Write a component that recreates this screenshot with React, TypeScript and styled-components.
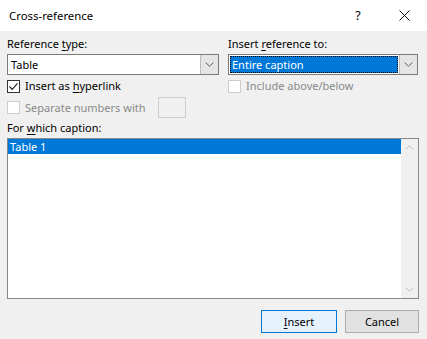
import React from "react";
import styled, { createGlobalStyle } from "styled-components";

const GlobalStyle = createGlobalStyle`
  html, body { margin: 0; padding: 0; }
  body {
    background: #f0f0f0;
    font-family: "Noto Sans", "Open Sans", sans-serif;
    font-size: 11px;
    color: #000;
  }
`;

const Dialog = styled.div`
  width: 427px;
  height: 339px;
  display: flex;
  flex-direction: column;
  background: #f0f0f0;
  overflow: hidden;
`;

const TitleBar = styled.div`
  height: 31px;
  background: #ffffff;
  display: flex;
  align-items: center;
  padding-left: 9px;
  box-sizing: border-box;
`;

const Title = styled.div`
  flex: 1;
  font-size: 11.4px;
  line-height: 16px;
`;

const TitleButton = styled.div`
  width: 46px;
  height: 31px;
  display: flex;
  align-items: center;
  justify-content: center;
  font-size: 12.5px;
`;

const Body = styled.div`
  flex: 1;
  display: flex;
  flex-direction: column;
  padding: 5px 8px 8px 7px;
  box-sizing: border-box;
`;

const TopGrid = styled.div`
  display: grid;
  grid-template-columns: 212px 190px;
  column-gap: 9px;
`;

const Column = styled.div`
  display: flex;
  flex-direction: column;
`;

const Label = styled.div<{ $disabled?: boolean }>`
  line-height: 16px;
  height: 16px;
  white-space: nowrap;
  color: ${(p) => (p.$disabled ? "#8a8a8a" : "#000")};
`;

const FieldLabel = styled(Label)`
  margin-bottom: 2px;
`;

const Combo = styled.div`
  height: 21px;
  box-sizing: border-box;
  border: 1px solid #7a7a7a;
  background: #fff;
  display: flex;
  align-items: stretch;
`;

const ComboText = styled.div<{ $selected?: boolean }>`
  flex: 1;
  display: flex;
  align-items: center;
  padding-left: ${(p) => (p.$selected ? "2px" : "3px")};
  margin: ${(p) => (p.$selected ? "1px" : "0")};
  background: ${(p) => (p.$selected ? "#0078d7" : "transparent")};
  color: ${(p) => (p.$selected ? "#fff" : "#000")};
  outline: ${(p) => (p.$selected ? "1px dotted #000" : "none")};
  outline-offset: -1px;
  line-height: 16px;
`;

const ComboButton = styled.div`
  width: 17px;
  background: #e5e5e5;
  border-left: 1px solid #bcbcbc;
  display: flex;
  align-items: center;
  justify-content: center;
`;

const CheckRow = styled.div<{ $mt: number; $h: number }>`
  display: flex;
  align-items: center;
  margin-top: ${(p) => p.$mt}px;
  height: ${(p) => p.$h}px;
  gap: 5px;
`;

const Box = styled.div<{ $disabled?: boolean }>`
  width: 13px;
  height: 13px;
  box-sizing: border-box;
  border: 1px solid ${(p) => (p.$disabled ? "#cccccc" : "#333333")};
  background: #fff;
  display: flex;
  align-items: center;
  justify-content: center;
  flex-shrink: 0;
`;

const SmallInput = styled.div`
  width: 28px;
  height: 21px;
  box-sizing: border-box;
  border: 1px solid #cccccc;
  background: #f0f0f0;
  margin-left: 8px;
`;

const CaptionLabel = styled(Label)`
  margin-top: 2px;
  margin-bottom: 2px;
`;

const ListBox = styled.div`
  height: 161px;
  box-sizing: border-box;
  border: 1px solid #828790;
  background: #fff;
  display: flex;
`;

const ListItems = styled.div`
  flex: 1;
`;

const ListItem = styled.div<{ $selected?: boolean }>`
  height: 15px;
  line-height: 15px;
  padding-left: 2px;
  background: ${(p) => (p.$selected ? "#0078d7" : "transparent")};
  color: ${(p) => (p.$selected ? "#fff" : "#000")};
`;

const ScrollBar = styled.div`
  width: 17px;
  background: #f0f0f0;
  display: flex;
  flex-direction: column;
  justify-content: space-between;
  align-items: center;
`;

const ScrollArrow = styled.div`
  height: 17px;
  width: 17px;
  display: flex;
  align-items: center;
  justify-content: center;
`;

const ButtonRow = styled.div`
  display: flex;
  justify-content: flex-end;
  gap: 8px;
  margin-top: 11px;
`;

const Button = styled.div<{ $default?: boolean }>`
  width: ${(p) => (p.$default ? "76px" : "74px")};
  height: 23px;
  box-sizing: border-box;
  border: 1px solid ${(p) => (p.$default ? "#0078d7" : "#adadad")};
  background: ${(p) => (p.$default ? "#e5f1fb" : "#e1e1e1")};
  display: flex;
  align-items: center;
  justify-content: center;
  line-height: 16px;
`;

const U = styled.span`
  text-decoration: underline;
  text-underline-offset: 2px;
`;

const Chevron = ({ up, color = "#606060" }: { up?: boolean; color?: string }) => (
  <svg width="9" height="5" viewBox="0 0 9 5">
    <path
      d={up ? "M0.5 4.5 L4.5 0.8 L8.5 4.5" : "M0.5 0.5 L4.5 4.2 L8.5 0.5"}
      fill="none"
      stroke={color}
      strokeWidth="1"
    />
  </svg>
);

const Check = () => (
  <svg width="11" height="11" viewBox="0 0 11 11">
    <path d="M1.5 5.5 L4.2 8.3 L9.5 2.3" fill="none" stroke="#222" strokeWidth="1.2" />
  </svg>
);

export default function App() {
  return (
    <>
      <GlobalStyle />
      <Dialog>
        <TitleBar>
          <Title>Cross-reference</Title>
          <TitleButton>?</TitleButton>
          <TitleButton>
            <svg width="11" height="11" viewBox="0 0 11 11">
              <path d="M0.5 0.5 L10.5 10.5 M10.5 0.5 L0.5 10.5" stroke="#111" strokeWidth="1" />
            </svg>
          </TitleButton>
        </TitleBar>
        <Body>
          <TopGrid>
            <Column>
              <FieldLabel>
                Reference <U>t</U>ype:
              </FieldLabel>
              <Combo>
                <ComboText>Table</ComboText>
                <ComboButton>
                  <Chevron />
                </ComboButton>
              </Combo>
              <CheckRow $mt={3} $h={16}>
                <Box>
                  <Check />
                </Box>
                <Label>
                  Insert as <U>h</U>yperlink
                </Label>
              </CheckRow>
              <CheckRow $mt={3} $h={21}>
                <Box $disabled />
                <Label $disabled>Separate numbers with</Label>
                <SmallInput />
              </CheckRow>
            </Column>
            <Column>
              <FieldLabel>
                Insert <U>r</U>eference to:
              </FieldLabel>
              <Combo>
                <ComboText $selected>Entire caption</ComboText>
                <ComboButton>
                  <Chevron />
                </ComboButton>
              </Combo>
              <CheckRow $mt={3} $h={16}>
                <Box $disabled />
                <Label $disabled>Include above/below</Label>
              </CheckRow>
            </Column>
          </TopGrid>
          <CaptionLabel>
            For <U>w</U>hich caption:
          </CaptionLabel>
          <ListBox>
            <ListItems>
              <ListItem $selected>Table 1</ListItem>
            </ListItems>
            <ScrollBar>
              <ScrollArrow>
                <Chevron up color="#bfbfbf" />
              </ScrollArrow>
              <ScrollArrow>
                <Chevron color="#bfbfbf" />
              </ScrollArrow>
            </ScrollBar>
          </ListBox>
          <ButtonRow>
            <Button $default>
              <span>
                <U>I</U>nsert
              </span>
            </Button>
            <Button>Cancel</Button>
          </ButtonRow>
        </Body>
      </Dialog>
    </>
  );
}
